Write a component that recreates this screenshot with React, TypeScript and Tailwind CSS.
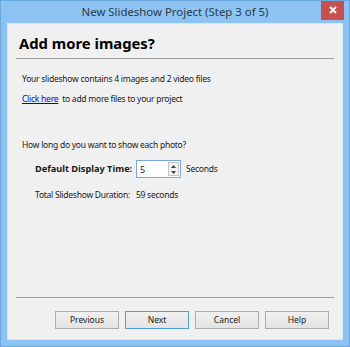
import React from "react";

export default function App() {
  const ui = { fontFamily: '"Noto Sans", "Open Sans", sans-serif' };
  return (
    <div
      className="w-[350px] h-[347px] bg-[#8cc3f2] border border-[#6aa8de] flex flex-col overflow-hidden"
      style={ui}
    >
      <div className="relative h-[22px] flex items-center justify-center shrink-0">
        <span className="text-[11.4px] text-[#2b3a48] leading-none">New Slideshow Project (Step 3 of 5)</span>
        <div className="absolute right-[5px] top-[-1px] w-[23px] h-[20px] bg-[#c75050] flex items-center justify-center">
          <svg width="8" height="8" viewBox="0 0 8 8">
            <path d="M1 1L7 7M7 1L1 7" stroke="white" strokeWidth="1.8" />
          </svg>
        </div>
      </div>
      <div className="flex-1 mx-[6px] mb-[6px] bg-[#f0f0f0] border border-[#d6e8f8] flex flex-col px-[8px]">
        <div className="h-[34px] pl-[3px] pt-[9px] text-[14.8px] font-bold text-black leading-[20px]">
          Add more images?
        </div>
        <div className="h-[2px] border-t border-[#a0a0a0] border-b-white" />
        <div className="pl-[6px] text-[8.5px] tracking-[-0.25px] text-[#1a1a1a] flex flex-col">
          <div className="mt-[13px] leading-[12px]">Your slideshow contains 4 images and 2 video files</div>
          <div className="mt-[8px] leading-[12px]">
            <span className="text-[#0000ee] underline">Click here</span>&nbsp; to add more files to your project
          </div>
          <div className="mt-[34px] leading-[12px]">How long do you want to show each photo?</div>
          <div className="mt-[9px] ml-[13px] flex items-center h-[18px]">
            <span className="font-bold text-[9.2px] tracking-normal w-[101px] whitespace-nowrap">Default Display Time:</span>
            <div className="w-[45px] h-[18px] border border-[#7aa7d8] bg-white flex items-center justify-between">
              <span className="pl-[3px] text-[9px] leading-none">5</span>
              <div className="w-[11px] h-[14px] mr-[1px] border border-[#c8c8c8] bg-[#f2f2f2] flex flex-col items-center justify-around">
                <svg width="5" height="3" viewBox="0 0 5 3"><path d="M0 3L2.5 0L5 3Z" fill="#404040" /></svg>
                <svg width="5" height="3" viewBox="0 0 5 3"><path d="M0 0L2.5 3L5 0Z" fill="#404040" /></svg>
              </div>
            </div>
            <span className="ml-[5px]">Seconds</span>
          </div>
          <div className="mt-[11px] ml-[13px] leading-[12px]">
            Total Slideshow Duration:&nbsp;&nbsp; 59 seconds
          </div>
        </div>
        <div className="flex-1" />
        <div className="h-[2px] border-t border-[#a0a0a0] border-b-white" />
        <div className="flex justify-end gap-[6px] pt-[12px] pb-[10px] pr-[5px]">
          {["Previous", "Next", "Cancel", "Help"].map((b) => (
            <div
              key={b}
              className={
                "w-[64px] h-[18px] flex items-center justify-center text-[8.5px] text-[#1a1a1a] bg-gradient-to-b from-[#f0f0f0] to-[#e3e3e3] border " +
                (b === "Next" ? "border-[#4f9be0]" : "border-[#acacac]")
              }
            >
              {b}
            </div>
          ))}
        </div>
      </div>
    </div>
  );
}
